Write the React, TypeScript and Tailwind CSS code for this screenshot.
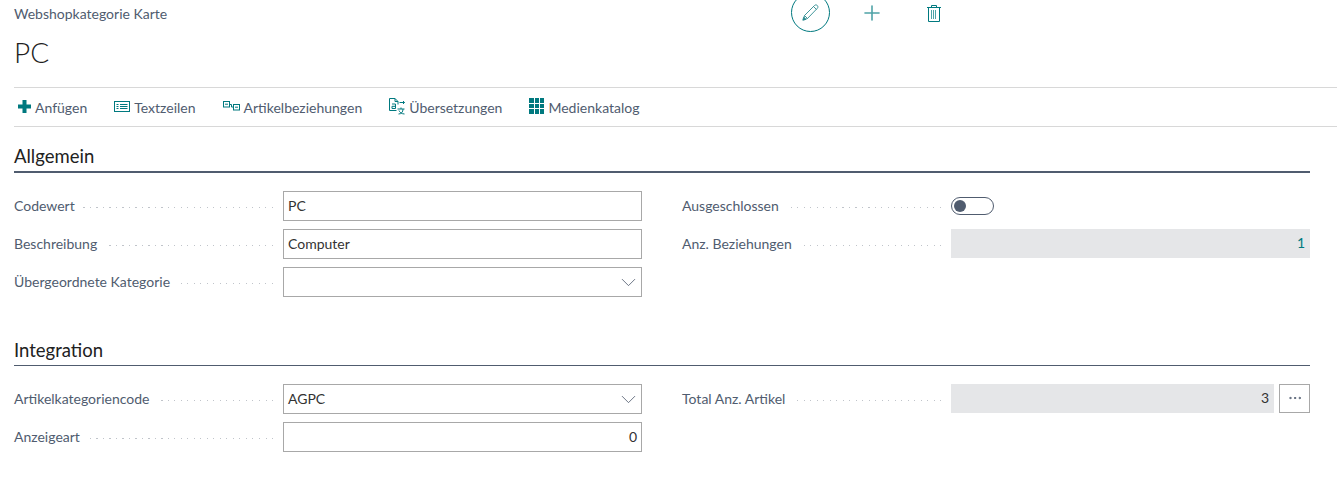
import { ChevronDown, Ellipsis, Plus } from "lucide-react";
import type { ReactNode } from "react";

const font = "font-['Lato','Open_Sans',sans-serif]";

const AddIcon = () => (
  <svg width="13" height="13" viewBox="0 0 13 13" fill="#00797f">
    <path d="M4.5 0h4v4.5H13v4H8.5V13h-4V8.5H0v-4h4.5z" />
  </svg>
);

const TextLinesIcon = () => (
  <svg width="16" height="11" viewBox="0 0 16 11" fill="none" stroke="#00797f">
    <rect x="0.5" y="0.5" width="15" height="10" />
    <path d="M2.5 3.5h2M2.5 5.5h2M2.5 7.5h2M6 3.5h7.5M6 5.5h7.5M6 7.5h7.5" />
  </svg>
);

const RelationsIcon = () => (
  <svg width="17" height="10" viewBox="0 0 17 10" fill="none" stroke="#00797f">
    <rect x="0.5" y="0.5" width="6" height="5.5" />
    <rect x="10.5" y="3.5" width="6" height="5.5" />
    <path d="M2 3.2h3M12 6.2h3M7 3.5h1.5V6h2" />
  </svg>
);

const TranslateIcon = () => (
  <svg width="16" height="17" viewBox="0 0 16 17" fill="none" stroke="#00797f">
    <path d="M7.5 12.5H.5V.5H6l3 3v3M6 .5v3h3" />
    <path d="M3 6h3.5v4.5H3V8.3h3.5" />
    <path d="M10.5 4.5h5M14 3l1.500 1.500L14 6" />
    <path d="M8.500 11h7M12 9.500V11M9.500 16c3 0 4.500-2 4.500-5M10 12.500c.5 1.500 2.500 3.500 5.500 3.500" />
  </svg>
);

const CatalogIcon = () => (
  <div className="grid grid-cols-3 gap-[1px] w-[15px] h-[16px]">
    {Array.from({ length: 9 }).map((_, i) => (
      <div key={i} className="bg-[#00797f]" />
    ))}
  </div>
);

const EditIcon = () => (
  <svg width="17" height="17" viewBox="0 0 17 17" fill="none" stroke="#2b8a8f" strokeWidth="0.9">
    <path d="M2.500 11.500 12.500 1.500c.8-.8 2-.8 2.800 0 .8.800.8 2 0 2.800L5.500 14.500l-4 1.500z" />
    <path d="M11.500 2.500l3 3M2.500 11.500l3 3" />
    <path d="M.8 16.200l.9-3 2.200 2.100z" fill="#2b8a8f" />
  </svg>
);

const TrashIcon = () => (
  <svg width="14" height="17" viewBox="0 0 14 17" fill="none" stroke="#00797f">
    <path d="M0 2.500h14M4.500 2.500V.5h5v2M1.500 2.500v14h11v-14" />
    <path d="M4.500 5v9M6.500 5v9M8.500 5v9" stroke="#4fa3a7" />
  </svg>
);

const actions: { label: string; icon: ReactNode }[] = [
  { label: "Anfügen", icon: <AddIcon /> },
  { label: "Textzeilen", icon: <TextLinesIcon /> },
  { label: "Artikelbeziehungen", icon: <RelationsIcon /> },
  { label: "Übersetzungen", icon: <TranslateIcon /> },
  { label: "Medienkatalog", icon: <CatalogIcon /> },
];

const Field = ({ label, children }: { label: string; children: ReactNode }) => (
  <div className="flex items-center h-[30px] mb-2">
    <span className="text-[14px] text-[#505c6f] whitespace-nowrap pb-[2px]">{label}</span>
    <div className="flex-1 h-px mx-[8px] mt-[2px] mr-[10px] bg-[repeating-linear-gradient(to_left,#c0c4ca_0,#c0c4ca_1px,transparent_1px,transparent_6.5px)]" />
    <div className="w-[359px] shrink-0">{children}</div>
  </div>
);

const Input = ({ value, right, select }: { value?: string; right?: boolean; select?: boolean }) => (
  <div
    className={`flex items-center h-[30px] border border-[#a8a8a8] bg-white px-[4px] text-[14px] text-[#333333] ${
      right ? "justify-end" : "justify-between"
    }`}
  >
    <span className="pb-[2px]">{value}</span>
    {select && <ChevronDown size={25} strokeWidth={0.8} color="#505c6f" className="-mr-[4px]" />}
  </div>
);

const ReadOnly = ({ value, teal }: { value: string; teal?: boolean }) => (
  <div
    className={`flex flex-1 items-center justify-end h-[29px] bg-[#e5e6e8] px-[5px] pb-[2px] text-[14px] ${
      teal ? "text-[#00797f]" : "text-[#333333]"
    }`}
  >
    {value}
  </div>
);

const Toggle = () => (
  <div className="flex items-center w-[43px] h-[18px] rounded-full border border-[#505c6f] bg-white pl-[2px]">
    <div className="w-[12px] h-[12px] rounded-full bg-[#505c6f]" />
  </div>
);

const Section = ({ title, thick, children }: { title: string; thick?: boolean; children: ReactNode }) => (
  <section>
    <h2 className={`text-[18.5px] leading-[24px] text-[#212121] pb-[3px] border-b-[#505c6f] ${thick ? "border-b-2" : "border-b"}`}>
      {title}
    </h2>
    <div className="grid grid-cols-2 gap-x-[40px] pt-[18px]">{children}</div>
  </section>
);

export default function App() {
  return (
    <div className={`${font} h-[497px] w-[1337px] overflow-hidden bg-white`}>
      <header className="flex pl-[14px] h-[87px]">
        <div className="w-[777px] shrink-0">
          <p className="text-[14px] leading-[17px] mt-[5px] text-[#505c6f]">Webshopkategorie Karte</p>
          <h1 className="text-[28px] leading-[38px] mt-[11px] font-light text-[#212121]">PC</h1>
        </div>
        <div className="flex items-start">
          <button className="flex items-center justify-center w-[39px] h-[39px] -mt-[7px] rounded-full border border-[#00797f]">
            <EditIcon />
          </button>
          <Plus size={24} strokeWidth={1.6} color="#4fa3a7" className="ml-[30px] mt-[1px]" />
          <span className="ml-[43px] mt-[5px]">
            <TrashIcon />
          </span>
        </div>
      </header>

      <nav className="flex items-center h-[40px] ml-[14px] border-y border-[#d8d8d8] pt-[1px] pl-[4px]">
        {actions.map((action) => (
          <div key={action.label} className="flex items-center gap-[4px] mr-[27px] text-[14px] text-[#505c6f]">
            <span className="flex items-center justify-center -mt-[3px]">{action.icon}</span>
            <span>{action.label}</span>
          </div>
        ))}
      </nav>

      <main className="pl-[14px] pr-[27px] pt-[17px]">
        <Section title="Allgemein" thick>
          <div>
            <Field label="Codewert"><Input value="PC" /></Field>
            <Field label="Beschreibung"><Input value="Computer" /></Field>
            <Field label="Übergeordnete Kategorie"><Input select /></Field>
          </div>
          <div>
            <Field label="Ausgeschlossen"><Toggle /></Field>
            <Field label="Anz. Beziehungen">
              <div className="flex -mt-[2px]"><ReadOnly value="1" teal /></div>
            </Field>
          </div>
        </Section>

        <div className="mt-[33px]">
          <Section title="Integration">
            <div>
              <Field label="Artikelkategoriencode"><Input value="AGPC" select /></Field>
              <Field label="Anzeigeart"><Input value="0" right /></Field>
            </div>
            <div>
              <Field label="Total Anz. Artikel">
                <div className="flex gap-[5px] -mt-[2px]">
                  <ReadOnly value="3" />
                  <button className="flex items-center justify-center w-[31px] h-[29px] border border-[#a8a8a8] bg-white">
                    <Ellipsis size={16} strokeWidth={1.5} color="#505c6f" />
                  </button>
                </div>
              </Field>
            </div>
          </Section>
        </div>
      </main>
    </div>
  );
}
